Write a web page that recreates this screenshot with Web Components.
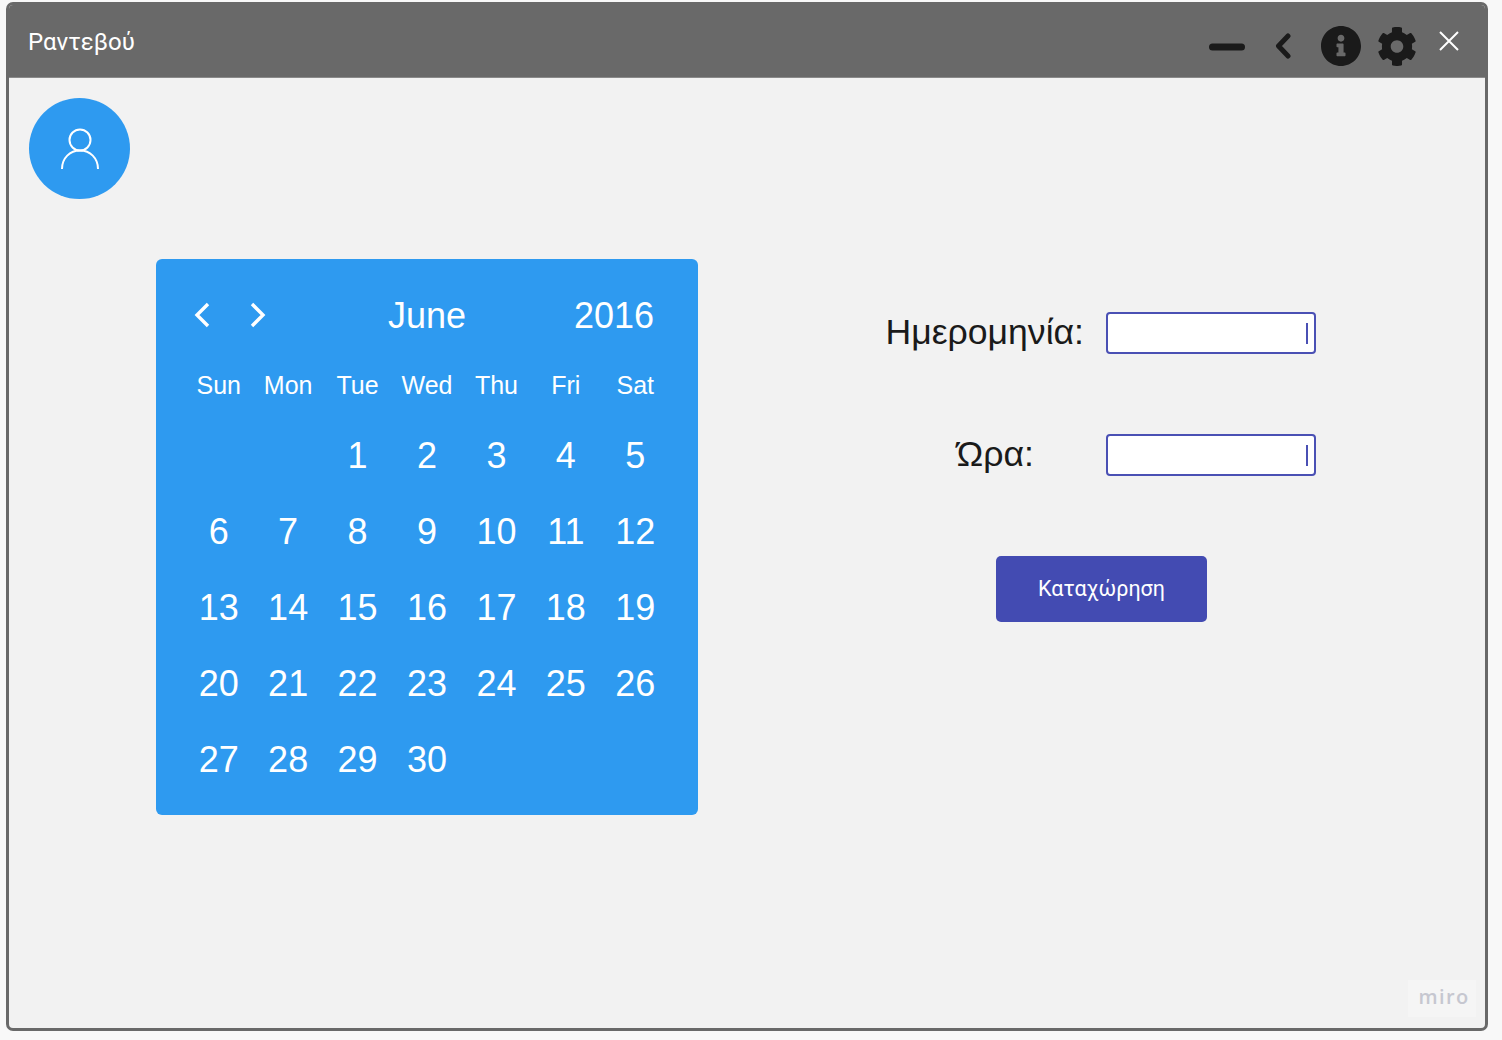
<!DOCTYPE html>
<html lang="el">
  <head>
    <meta charset="UTF-8" />
    <title>Ραντεβού</title>
    <style>
      html, body { margin: 0; height: 100%; background: #f8f8f8; overflow: hidden; }
      body { font-family: "Liberation Sans", Arial, sans-serif; }
    </style>
  </head>
  <body>
    <rv-window heading="Ραντεβού">
      <rv-avatar></rv-avatar>
      <div style="display:flex;align-items:flex-start;margin:60px 0 0 127px">
        <rv-calendar month="June" year="2016" offset="2" days="30"></rv-calendar>
        <rv-form></rv-form>
      </div>
      <rv-badge slot="overlay">miro</rv-badge>
    </rv-window>

    <script>
      class RvWindow extends HTMLElement {
        constructor() {
          super();
          this.attachShadow({ mode: "open" });
          this.shadowRoot.innerHTML = `
            <style>
              :host { display: block; box-sizing: border-box; width: 1482px; height: 1029px; margin: 2px 0 0 6px;
                border: 3px solid #696969; border-radius: 7px; background: #f2f2f2; position: relative; overflow: hidden; }
              header { height: 72px; background: #696969; display: flex; align-items: center; padding: 0 26px 0 19px; color: #fff;
                border-bottom: 1px solid #8a8a8a; }
              h1 { margin: 2px 0 0; font: 400 24px/1 "Roboto", sans-serif; flex: 1; }
              .tools { display: flex; align-items: center; }
              svg { display: block; }
              main { padding: 20px 0 0 20px; }
            </style>
            <header>
              <h1></h1>
              <div class="tools">
                <svg width="36" height="8" viewBox="0 0 36 8" style="position:relative;top:6px"><rect width="36" height="7" y=".5" rx="3.5" fill="#1a1a1a"/></svg>
                <svg width="16" height="26" viewBox="0 0 16 26" style="margin-left:30px;position:relative;top:5px"><path d="M13 3 3.5 13 13 23" fill="none" stroke="#1a1a1a" stroke-width="5" stroke-linecap="round" stroke-linejoin="round"/></svg>
                <svg width="40" height="40" viewBox="8 8 496 496" style="margin-left:30px;position:relative;top:5px"><path fill="#1a1a1a" d="M256 8C119 8 8 119.1 8 256c0 137 111 248 248 248s248-111 248-248C504 119.1 393 8 256 8zm0 110c23.2 0 42 18.8 42 42s-18.8 42-42 42-42-18.8-42-42 18.8-42 42-42zm56 254c0 6.6-5.4 12-12 12h-88c-6.6 0-12-5.4-12-12v-24c0-6.6 5.4-12 12-12h12v-64h-12c-6.6 0-12-5.4-12-12v-24c0-6.6 5.4-12 12-12h64c6.6 0 12 5.4 12 12v100h12c6.6 0 12 5.4 12 12v24z"/></svg>
                <svg width="38" height="39" viewBox="16 8 480 496" style="margin-left:17px;position:relative;top:5px"><path fill="#1a1a1a" d="M487.4 315.7l-42.6-24.6c4.3-23.2 4.3-47 0-70.2l42.6-24.6c4.9-2.8 7.1-8.6 5.5-14-11.1-35.6-30-67.8-54.7-94.6-3.8-4.1-10-5.1-14.8-2.3L380.8 110c-17.9-15.4-38.5-27.3-60.8-35.1V25.8c0-5.6-3.9-10.5-9.4-11.7-36.7-8.2-74.3-7.8-109.2 0-5.5 1.2-9.4 6.1-9.4 11.7V75c-22.2 7.9-42.8 19.8-60.8 35.1L88.7 85.5c-4.9-2.8-11-1.9-14.8 2.3-24.7 26.7-43.6 58.9-54.7 94.6-1.7 5.4.6 11.2 5.5 14L67.3 221c-4.3 23.2-4.3 47 0 70.2l-42.6 24.6c-4.9 2.8-7.1 8.6-5.5 14 11.1 35.6 30 67.8 54.7 94.6 3.8 4.1 10 5.1 14.8 2.3l42.6-24.6c17.9 15.4 38.5 27.3 60.8 35.1v49.2c0 5.6 3.9 10.5 9.4 11.7 36.7 8.2 74.3 7.8 109.2 0 5.5-1.2 9.4-6.1 9.4-11.7v-49.2c22.2-7.9 42.8-19.8 60.8-35.1l42.6 24.6c4.9 2.8 11 1.9 14.8-2.3 24.7-26.7 43.6-58.9 54.7-94.6 1.5-5.5-.7-11.3-5.6-14.1zM256 336c-44.1 0-80-35.9-80-80s35.9-80 80-80 80 35.9 80 80-35.9 80-80 80z"/></svg>
                <svg width="20" height="20" viewBox="0 0 20 20" style="margin-left:23px"><path d="M1 1 19 19M19 1 1 19" stroke="#fff" stroke-width="2" fill="none"/></svg>
              </div>
            </header>
            <main><slot></slot></main>
            <slot name="overlay"></slot>`;
        }

        connectedCallback() {
          this.shadowRoot.querySelector("h1").textContent = this.getAttribute("heading");
        }
      }

      class RvAvatar extends HTMLElement {
        constructor() {
          super();
          this.attachShadow({ mode: "open" });
          this.shadowRoot.innerHTML = `
            <style>
              :host { display: flex; width: 101px; height: 101px; border-radius: 50%; background: #2e9af0;
                align-items: center; justify-content: center; }
            </style>
            <svg width="40" height="44" viewBox="0 0 40 44" fill="none" stroke="#fff" stroke-width="2">
              <circle cx="20" cy="13" r="10.5"/>
              <path d="M2 42C2 31 10 23.5 20 23.5S38 31 38 42"/>
            </svg>`;
        }
      }

      class RvCalendar extends HTMLElement {
        constructor() {
          super();
          this.attachShadow({ mode: "open" });
          this.shadowRoot.innerHTML = `
            <style>
              :host { display: block; box-sizing: border-box; flex: none; width: 542px; height: 556px; background: #2e9af0; border-radius: 6px;
                color: #fff; font-family: "Liberation Sans", Arial, sans-serif; padding: 36px 28px 0; }
              .head { display: grid; grid-template-columns: 1fr auto 1fr; align-items: center; height: 42px; font-size: 36px; }
              .arrows { display: flex; gap: 40px; padding-left: 10px; margin-top: -2px; }
              .year { text-align: right; padding-right: 16px; }
              svg { display: block; }
              .grid { display: grid; grid-template-columns: repeat(7, 1fr); text-align: center; }
              .wd { font-size: 25px; line-height: 30px; padding: 33px 0 18.4px; }
              .d { font-size: 36px; height: 75.8px; line-height: 75.8px; }
            </style>
            <div class="head">
              <div class="arrows">
                <svg width="16" height="26" viewBox="0 0 16 26"><path d="M14 2 3 13 14 24" fill="none" stroke="#fff" stroke-width="3.4"/></svg>
                <svg width="16" height="26" viewBox="0 0 16 26"><path d="M2 2 13 13 2 24" fill="none" stroke="#fff" stroke-width="3.4"/></svg>
              </div>
              <div class="month"></div>
              <div class="year"></div>
            </div>
            <div class="grid"></div>`;
        }

        connectedCallback() {
          this.shadowRoot.querySelector(".month").textContent = this.getAttribute("month");
          this.shadowRoot.querySelector(".year").textContent = this.getAttribute("year");
          const grid = this.shadowRoot.querySelector(".grid");
          ["Sun", "Mon", "Tue", "Wed", "Thu", "Fri", "Sat"].forEach((name) => {
            const el = document.createElement("div");
            el.className = "wd";
            el.textContent = name;
            grid.appendChild(el);
          });
          const offset = Number(this.getAttribute("offset"));
          for (let i = 0; i < offset; i++) grid.appendChild(document.createElement("div"));
          for (let day = 1; day <= Number(this.getAttribute("days")); day++) {
            const el = document.createElement("div");
            el.className = "d";
            el.textContent = day;
            grid.appendChild(el);
          }
        }
      }

      class RvField extends HTMLElement {
        constructor() {
          super();
          this.attachShadow({ mode: "open" });
          this.shadowRoot.innerHTML = `
            <style>
              :host { display: flex; align-items: center; justify-content: flex-end; height: 42px; color: #1a1a1a; }
              label { font-size: 35.6px; line-height: 42px; white-space: nowrap; padding: 0 var(--label-inset, 0) 2px 0; margin-right: 22px; }
              .box { flex: none; box-sizing: border-box; width: 210px; height: 42px; background: #fff; border: 2px solid #4a50b4; border-radius: 4px;
                display: flex; align-items: center; justify-content: flex-end; padding-right: 6px; }
              .caret { width: 2px; height: 21px; background: #4a50b4; }
            </style>
            <label><slot></slot></label>
            <div class="box"><div class="caret"></div></div>`;
        }
      }

      class RvButton extends HTMLElement {
        constructor() {
          super();
          this.attachShadow({ mode: "open" });
          this.shadowRoot.innerHTML = `
            <style>
              :host { display: flex; align-items: center; justify-content: center; width: 211px; height: 66px; background: #434bb2;
                border-radius: 5px; color: #fff; font: 400 21.5px/1 "Roboto", sans-serif; }
            </style>
            <slot></slot>`;
        }
      }

      class RvForm extends HTMLElement {
        constructor() {
          super();
          this.attachShadow({ mode: "open" });
          this.shadowRoot.innerHTML = `
            <style>
              :host { display: flex; flex: none; flex-direction: column; width: 429px; margin: 53px 0 0 189px; }
              rv-field { font-family: "Liberation Sans", Arial, sans-serif; }
              rv-field + rv-field { margin-top: 80px; }
              rv-button { margin: 80px 0 0 109px; }
            </style>
            <rv-field>Ημερομηνία:</rv-field>
            <rv-field style="--label-inset:50px">Ώρα:</rv-field>
            <rv-button>Καταχώρηση</rv-button>`;
        }
      }

      class RvBadge extends HTMLElement {
        constructor() {
          super();
          this.attachShadow({ mode: "open" });
          this.shadowRoot.innerHTML = `
            <style>
              :host { position: absolute; right: 9px; bottom: 11px; box-sizing: border-box; width: 68px; height: 37px; background: #f5f5f5;
                display: flex; align-items: center; justify-content: center; padding: 0 0 4px 4px; color: #c6c7d0;
                font: 600 20px/1 "Open Sans", sans-serif; letter-spacing: 1.4px; }
            </style>
            <slot></slot>`;
        }
      }

      customElements.define("rv-window", RvWindow);
      customElements.define("rv-avatar", RvAvatar);
      customElements.define("rv-calendar", RvCalendar);
      customElements.define("rv-field", RvField);
      customElements.define("rv-button", RvButton);
      customElements.define("rv-form", RvForm);
      customElements.define("rv-badge", RvBadge);
    </script>
  </body>
</html>
